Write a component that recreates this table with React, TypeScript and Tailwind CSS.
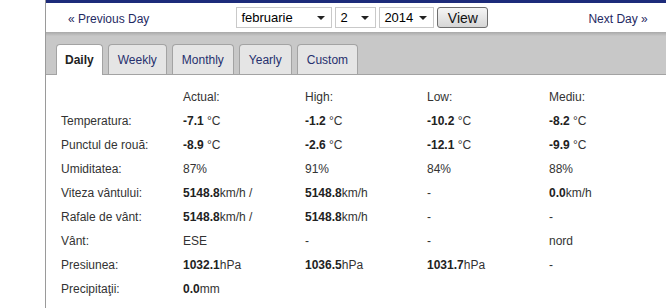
import { ReactNode } from 'react';

const tabs = ['Daily', 'Weekly', 'Monthly', 'Yearly', 'Custom'];

type Cell = ReactNode;

const B = ({ n, u }: { n: string; u?: string }) => (
  <>
    <b className="font-bold text-[#222]">{n}</b>
    {u}
  </>
);

const rows: [string, Cell, Cell, Cell, Cell][] = [
  ['Temperatura:', <B n="-7.1" u=" °C" />, <B n="-1.2" u=" °C" />, <B n="-10.2" u=" °C" />, <B n="-8.2" u=" °C" />],
  ['Punctul de rouă:', <B n="-8.9" u=" °C" />, <B n="-2.6" u=" °C" />, <B n="-12.1" u=" °C" />, <B n="-9.9" u=" °C" />],
  ['Umiditatea:', '87%', '91%', '84%', '88%'],
  ['Viteza vântului:', <B n="5148.8" u="km/h /" />, <B n="5148.8" u="km/h" />, '-', <B n="0.0" u="km/h" />],
  ['Rafale de vânt:', <B n="5148.8" u="km/h /" />, <B n="5148.8" u="km/h" />, '-', '-'],
  ['Vânt:', 'ESE', '-', '-', 'nord'],
  ['Presiunea:', <B n="1032.1" u="hPa" />, <B n="1036.5" u="hPa" />, <B n="1031.7" u="hPa" />, '-'],
  ['Precipitaţii:', <B n="0.0" u="mm" />, '', '', ''],
];

function Select({ value, width }: { value: string; width: string }) {
  return (
    <div className={`${width} h-[21px] bg-white border border-[#c9c9c9] flex items-center justify-between pl-[4px] pr-[6px] text-[13px] text-black`}>
      <span>{value}</span>
      <span className="w-0 h-0 border-l-[4px] border-r-[4px] border-t-[4px] border-l-transparent border-r-transparent border-t-[#222]" />
    </div>
  );
}

export default function App() {
  return (
    <div className="w-[666px] h-[308px] overflow-hidden bg-white flex font-['Liberation_Sans',Arial,sans-serif] text-[12px] text-[#333]">
      <div className="w-[45px] shrink-0" />
      <div className="flex-1 border-l border-[#9a9a9a] flex flex-col">
        <div className="h-[3px] bg-[#1d2b7a]" />

        {/* date nav */}
        <div className="h-[29px] flex items-center pl-[22px]">
          <a href="#prev" className="text-[#1f2a63] pt-[3px]">« Previous Day</a>
          <div className="ml-[87px] flex items-center gap-[3px]">
            <Select value="februarie" width="w-[96px]" />
            <Select value="2" width="w-[41px]" />
            <Select value="2014" width="w-[55px]" />
            <button className="h-[21px] w-[51px] rounded-[3px] border border-[#6f6f6f] bg-gradient-to-b from-[#f6f6f6] to-[#d6d6d6] text-[14px] text-[#111]">
              View
            </button>
          </div>
          <a href="#next" className="ml-[100px] text-[#1f2a63] pt-[3px]">Next Day »</a>
        </div>

        {/* tabs */}
        <div className="h-[43px] bg-gradient-to-b from-[#a9a9a9] via-[#c8c8c8] via-[10%] to-[#c8c8c8] border-b border-[#a3a3a3] flex items-end gap-[5px] pl-[10px]">
          {tabs.map((t, i) => (
            <div
              key={t}
              className={
                i === 0
                  ? 'h-[31px] -mb-px px-[8px] flex items-center rounded-t-[4px] border border-b-0 border-[#a3a3a3] bg-white font-bold text-[#222]'
                  : 'h-[30px] px-[9px] flex items-center rounded-t-[4px] border border-b-0 border-[#a3a3a3] bg-[#e5e5e5] text-[#25306e]'
              }
            >
              {t}
            </div>
          ))}
        </div>

        {/* data */}
        <table className="ml-[15px] mt-[10px] border-collapse table-fixed w-[610px]">
          <thead>
            <tr className="h-[24px]">
              <th className="w-[122px]" />
              {['Actual:', 'High:', 'Low:', 'Mediu:'].map(h => (
                <th key={h} className="w-[122px] text-left font-normal">{h}</th>
              ))}
            </tr>
          </thead>
          <tbody>
            {rows.map(r => (
              <tr key={r[0]} className="h-[24px]">
                {r.map((c, i) => (
                  <td key={i} className="p-0 whitespace-nowrap">{c}</td>
                ))}
              </tr>
            ))}
          </tbody>
        </table>
      </div>
    </div>
  );
}
